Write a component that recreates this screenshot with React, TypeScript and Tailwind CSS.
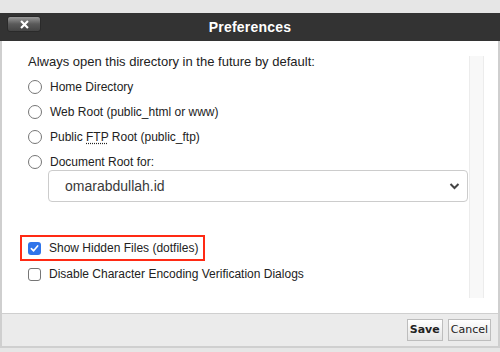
import React from "react";

const Radio: React.FC<{ label: React.ReactNode }> = ({ label }) => (
  <label className="flex items-center h-[25px] gap-[8px]">
    <span className="w-[14px] h-[14px] rounded-full border border-[#767676] bg-white shrink-0" />
    <span>{label}</span>
  </label>
);

const Check: React.FC<{ label: string; checked?: boolean }> = ({ label, checked }) => (
  <label className="flex items-center h-[24px] gap-[8px] whitespace-nowrap">
    {checked ? (
      <span className="w-[13px] h-[13px] rounded-[3px] bg-[#2f74ea] flex items-center justify-center shrink-0">
        <svg width="9" height="9" viewBox="0 0 10 10">
          <path d="M1.5 5.2 L4 7.6 L8.5 2.2" stroke="white" strokeWidth="1.8" fill="none" strokeLinecap="round" strokeLinejoin="round" />
        </svg>
      </span>
    ) : (
      <span className="w-[13px] h-[13px] rounded-[3px] border border-[#767676] bg-white shrink-0" />
    )}
    <span>{label}</span>
  </label>
);

export default function App() {
  return (
    <div className="w-[500px] h-[352px] bg-[#e6e6e6] pt-[13px] font-['Liberation_Sans',Arial,sans-serif] text-[12px] text-[#222]">
      {/* title bar */}
      <div className="relative h-[28px] bg-[#333333] flex items-center justify-center">
        <button className="absolute left-[7px] top-[3px] w-[34px] h-[16px] rounded-[3px] bg-gradient-to-b from-[#9a9a9a] via-[#5a5a5a] to-[#444] border border-[#2a2a2a] flex items-center justify-center">
          <svg width="9" height="9" viewBox="0 0 10 10">
            <path d="M2 2 L8 8 M8 2 L2 8" stroke="white" strokeWidth="2.4" strokeLinecap="square" />
          </svg>
        </button>
        <h1 className="text-white font-bold text-[14px] tracking-[0.2px]">Preferences</h1>
      </div>

      {/* body */}
      <div className="h-[272px] bg-white border-x-2 border-[#cfcfcf] flex">
        <div className="flex-1 pl-[26px] pt-[13px]">
          <p className="leading-[16px] text-[13px]">Always open this directory in the future by default:</p>
          <div className="mt-[4px] flex flex-col">
            <Radio label="Home Directory" />
            <Radio label="Web Root (public_html or www)" />
            <Radio
              label={
                <>
                  Public <abbr className="underline decoration-dotted underline-offset-2">FTP</abbr> Root (public_ftp)
                </>
              }
            />
            <Radio label="Document Root for:" />
          </div>
          <div className="ml-[20px] mt-[-4px] w-[420px] h-[32px] border border-[#cccccc] rounded-[4px] flex items-center justify-between pl-[16px] pr-[7px] text-[14px] text-[#3a3a3a]">
            <span>omarabdullah.id</span>
            <svg width="11" height="8" viewBox="0 0 11 8">
              <path d="M1.5 2 L5.5 6 L9.5 2" stroke="#444" strokeWidth="2" fill="none" />
            </svg>
          </div>
          <div className="mt-[33px] -ml-[8px] inline-flex h-[26px] border-2 border-[#ff2a14] pl-[6px] pr-[5px] items-center">
            <Check label="Show Hidden Files (dotfiles)" checked />
          </div>
          <div className="mt-[1px]">
            <Check label="Disable Character Encoding Verification Dialogs" />
          </div>
        </div>
        <div className="w-[15px] mt-[15px] h-[242px] mr-[14px] bg-[#f8f8f8] border-x border-[#ececec]" />
      </div>

      {/* footer */}
      <div className="h-[35px] bg-[#ebebeb] border-t border-x-2 border-b-2 border-[#cfcfcf] flex items-center justify-end gap-[5px] pr-[7px] font-['DejaVu_Sans',Verdana,sans-serif] text-[11px]">
        <button className="h-[22px] px-[2px] bg-gradient-to-b from-white to-[#e4e4e4] border border-[#bdbdbd] font-bold text-[#222]">Save</button>
        <button className="h-[22px] px-[2px] bg-gradient-to-b from-white to-[#e4e4e4] border border-[#bdbdbd] text-[#222]">Cancel</button>
      </div>
    </div>
  );
}
